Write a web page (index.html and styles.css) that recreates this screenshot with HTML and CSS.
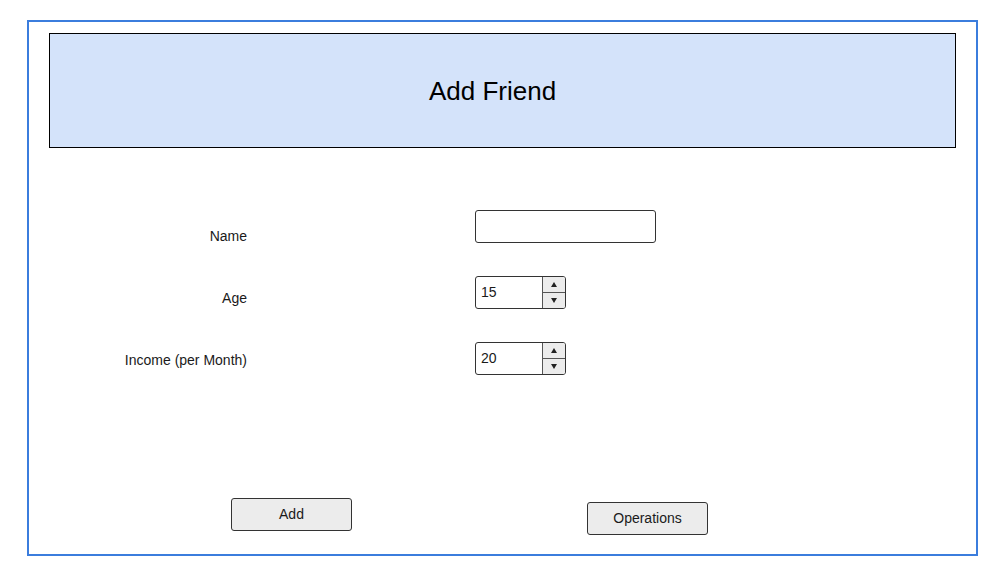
FILE: index.html
```html
<!DOCTYPE html>
<html>
<head>
<meta charset="utf-8">
<link rel="stylesheet" href="styles.css">
</head>
<body>
<div class="frame">
  <div class="header">Add Friend</div>
  <div class="form">
    <div class="labels">
      <div class="label">Name</div>
      <div class="label">Age</div>
      <div class="label">Income (per Month)</div>
    </div>
    <div class="fields">
      <div class="textbox"></div>
      <div class="spinner">
        <div class="value">15</div>
        <div class="arrows">
          <div class="arrow"><span class="up"></span></div>
          <div class="arrow"><span class="down"></span></div>
        </div>
      </div>
      <div class="spinner">
        <div class="value">20</div>
        <div class="arrows">
          <div class="arrow"><span class="up"></span></div>
          <div class="arrow"><span class="down"></span></div>
        </div>
      </div>
    </div>
  </div>
  <div class="footer">
    <div class="btn">Add</div>
    <div class="btn btn-ops">Operations</div>
  </div>
</div>
</body>
</html>
```
FILE: styles.css
```css
* { box-sizing: border-box; }
html, body { margin: 0; padding: 0; background: #fff; }
body {
  font-family: "Liberation Sans", Arial, sans-serif;
  color: #1a1a1a;
}
.frame {
  margin: 20px 0 0 27px;
  width: 951px;
  height: 536px;
  border: 2px solid #3b7ddd;
  padding: 11px 20px 0 20px;
}
.header {
  height: 115px;
  background: #d4e3fa;
  border: 1px solid #000;
  display: flex;
  align-items: center;
  justify-content: center;
  font-size: 26px;
  color: #000;
  padding-right: 20px;
  padding-top: 1px;
}
.form {
  display: flex;
  align-items: flex-start;
  margin-left: -20px;
}
.labels {
  width: 218px;
  padding-top: 80px;
  display: flex;
  flex-direction: column;
  gap: 46px;
}
.label {
  text-align: right;
  font-size: 14px;
  line-height: 17px;
  height: 16px;
  color: #1a1a1a;
}
.fields {
  margin-left: 228px;
  padding-top: 62px;
  display: flex;
  flex-direction: column;
  gap: 33px;
}
.textbox {
  width: 181px;
  height: 33px;
  border: 1px solid #333;
  border-radius: 3px;
  background: #fff;
}
.spinner {
  width: 91px;
  height: 33px;
  border: 1px solid #333;
  border-radius: 3px;
  display: flex;
  overflow: hidden;
}
.value {
  flex: 1;
  font-size: 14px;
  line-height: 31px;
  padding-left: 5px;
  color: #1a1a1a;
}
.arrows {
  width: 23px;
  border-left: 1px solid #555;
  display: flex;
  flex-direction: column;
  background: #ececec;
}
.arrow {
  flex: 1;
  display: flex;
  align-items: center;
  justify-content: center;
}
.arrow + .arrow { border-top: 1px solid #555; }
.up {
  width: 0; height: 0;
  border-left: 3.5px solid transparent;
  border-right: 3.5px solid transparent;
  border-bottom: 5px solid #222;
}
.down {
  width: 0; height: 0;
  border-left: 3.5px solid transparent;
  border-right: 3.5px solid transparent;
  border-top: 5px solid #222;
}
.footer {
  display: flex;
  align-items: flex-start;
  margin-top: 123px;
  margin-left: 182px;
  gap: 235px;
}
.btn {
  width: 121px;
  height: 33px;
  border: 1px solid #333;
  border-radius: 3px;
  background: #ececec;
  font-size: 14px;
  line-height: 31px;
  text-align: center;
  color: #1a1a1a;
}
.btn-ops { margin-top: 4px; }
```
